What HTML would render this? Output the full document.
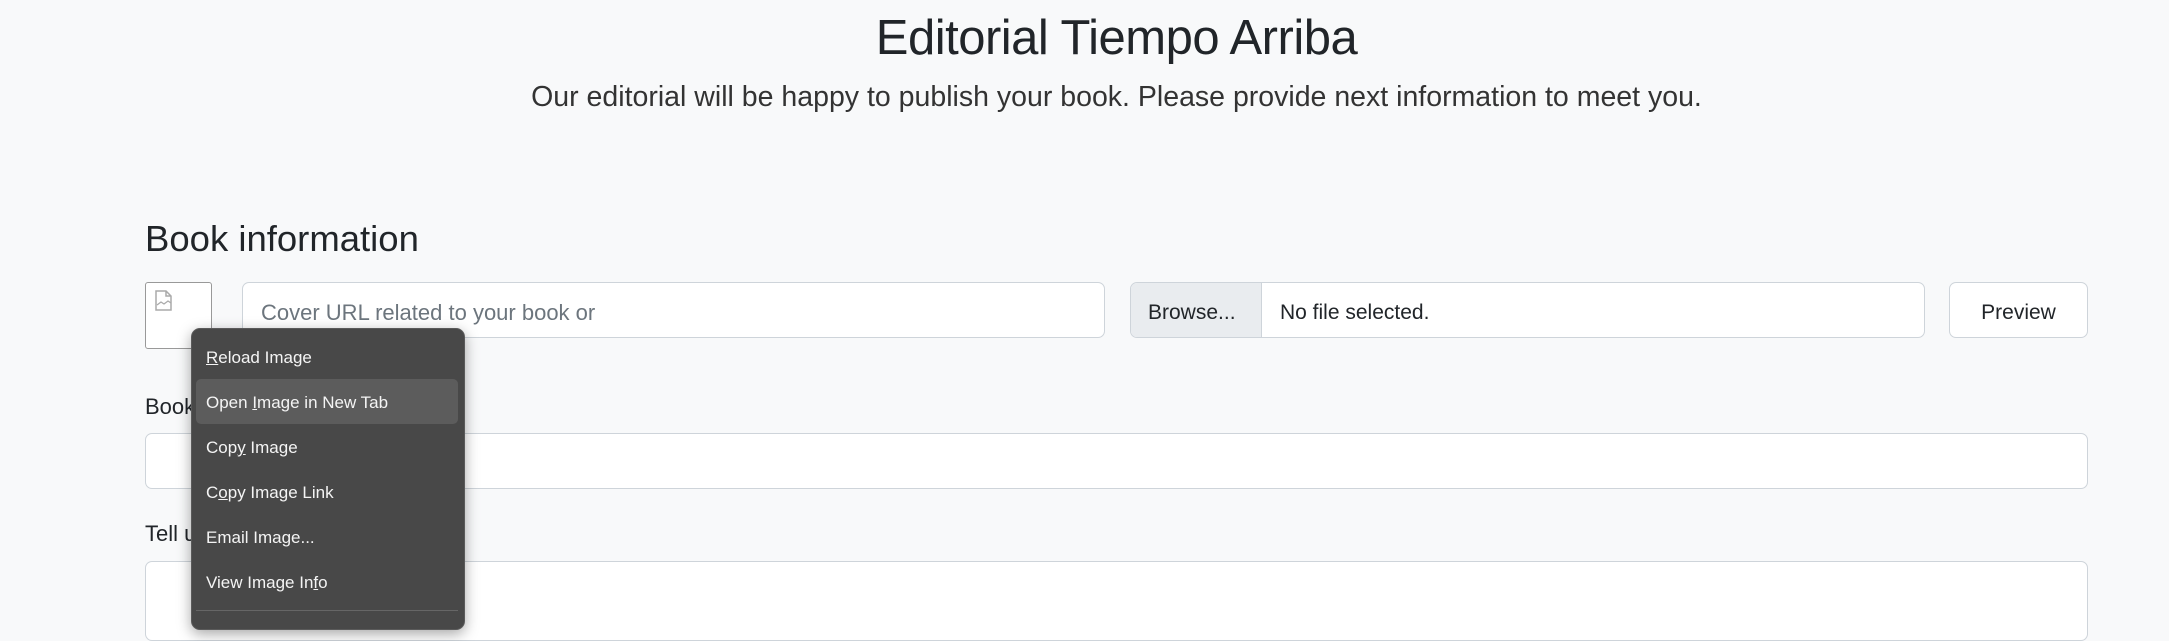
<!DOCTYPE html>
<html><head><meta charset="utf-8"><style>
body{margin:0;width:2169px;height:614px;background:#f8f9fa;font-family:"Liberation Sans",sans-serif;color:#212529;position:relative;overflow:hidden}
.a{position:absolute;white-space:nowrap}
.box{position:absolute;background:#fff;border:1px solid #ced4da;border-radius:7px;box-sizing:border-box}
.menu{position:absolute;left:191px;top:328px;width:272px;height:300px;background:#484848;border-radius:9px;border:1px solid #5a5a5a;box-shadow:0 4px 14px rgba(0,0,0,.35);color:#f4f4f4;font-size:17px}
.menu div{position:absolute;left:14px}
</style></head><body>
<div class="a" style="left:32px;width:2169px;text-align:center;top:10px;font-size:49px;font-weight:300;letter-spacing:-0.5px">Editorial Tiempo Arriba</div>
<div class="a" style="left:32px;width:2169px;text-align:center;top:81px;font-size:28.5px;font-weight:300;color:#333">Our editorial will be happy to publish your book. Please provide next information to meet you.</div>
<div class="a" style="left:145px;top:218px;font-size:36.5px">Book information</div>
<div class="box" style="left:145px;top:282px;width:67px;height:67px;border-color:#999;border-radius:3px"></div>
<svg class="a" style="left:154px;top:290px" width="20" height="22" viewBox="0 0 20 22"><path d="M2 1h10l5 5v14H2z M12 1v5h5" fill="none" stroke="#aaa" stroke-width="1.5"/><path d="M3 15l4-3 3 2 4-3 3 2" fill="none" stroke="#aaa" stroke-width="1.3"/></svg>
<div class="box" style="left:242px;top:282px;width:863px;height:56px"></div>
<div class="a" style="left:261px;top:300px;font-size:22px;color:#6c757d">Cover URL related to your book or</div>
<div class="box" style="left:1130px;top:282px;width:795px;height:56px;overflow:hidden"><div style="position:absolute;left:0;top:0;width:130px;height:56px;background:#e9ecef;border-right:1px solid #ced4da"></div></div>
<div class="a" style="left:1148px;top:301px;font-size:21px">Browse...</div>
<div class="a" style="left:1280px;top:301px;font-size:21px">No file selected.</div>
<div class="box" style="left:1949px;top:282px;width:139px;height:56px"></div>
<div class="a" style="left:1949px;width:139px;text-align:center;top:301px;font-size:21px">Preview</div>
<div class="a" style="left:145px;top:394px;font-size:22px">Book</div>
<div class="box" style="left:145px;top:433px;width:1943px;height:56px"></div>
<div class="a" style="left:145px;top:521px;font-size:22px">Tell us</div>
<div class="box" style="left:145px;top:561px;width:1943px;height:80px"></div>
<div class="menu">
<div style="top:19px"><u>R</u>eload Image</div>
<div style="left:4px;top:50px;width:262px;height:45px;background:#5c5c5c;border-radius:5px"></div>
<div style="top:64px">Open <u>I</u>mage in New Tab</div>
<div style="top:109px">Cop<u>y</u> Image</div>
<div style="top:154px">C<u>o</u>py Image Link</div>
<div style="top:199px">Email Image...</div>
<div style="top:244px">View Image In<u>f</u>o</div>
<div style="left:4px;top:281px;width:262px;height:1px;background:#666"></div>
</div>
</body></html>
